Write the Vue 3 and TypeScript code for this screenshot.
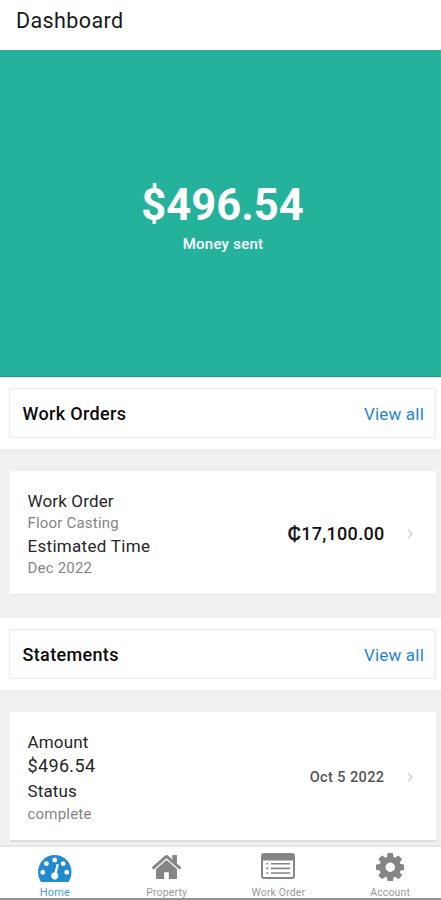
<script setup lang="ts">
interface Line {
  text: string
  kind: string
}
interface Section {
  id: string
  title: string
  lines: Line[]
  symbol: string
  value: string
}
interface Tab {
  id: string
  label: string
}

const sections: Section[] = [
  {
    id: 'orders',
    title: 'Work Orders',
    lines: [
      { text: 'Work Order', kind: 'order' },
      { text: 'Floor Casting', kind: 'muted' },
      { text: 'Estimated Time', kind: 'estimate' },
      { text: 'Dec 2022', kind: 'muted date' },
    ],
    symbol: '₵',
    value: '17,100.00',
  },
  {
    id: 'statements',
    title: 'Statements',
    lines: [
      { text: 'Amount', kind: 'amount' },
      { text: '$496.54', kind: 'sum' },
      { text: 'Status', kind: 'status' },
      { text: 'complete', kind: 'muted complete' },
    ],
    symbol: '',
    value: 'Oct 5 2022',
  },
]

const tabs: Tab[] = [
  { id: 'home', label: 'Home' },
  { id: 'property', label: 'Property' },
  { id: 'order', label: 'Work Order' },
  { id: 'account', label: 'Account' },
]
</script>

<template>
  <div class="screen">
    <header class="header"><h1>Dashboard</h1></header>
    <section class="hero">
      <div class="total">$496.54</div>
      <div class="caption">Money sent</div>
    </section>
    <main class="content">
      <section v-for="s in sections" :key="s.id" :class="['section', s.id]">
        <div class="band">
          <div class="bar">
            <h2>{{ s.title }}</h2>
            <a class="all">View all</a>
          </div>
        </div>
        <div class="tray">
          <article class="card">
            <div class="lines">
              <div v-for="l in s.lines" :key="l.text" :class="['line', l.kind]"><span>{{ l.text }}</span></div>
            </div>
            <div class="value"><span v-if="s.symbol" class="symbol">{{ s.symbol }}</span>{{ s.value }}</div>
            <svg class="chevron" viewBox="0 0 6 10"><path d="M1 1l4 4-4 4" /></svg>
          </article>
        </div>
      </section>
    </main>
    <nav class="tabs">
      <div v-for="t in tabs" :key="t.id" :class="['tab', t.id]">
        <div class="icon">
          <svg v-if="t.id === 'home'" viewBox="0 256 1792 1408" preserveAspectRatio="none"><path d="M384 1152q0-53-37.5-90.5t-90.5-37.5-90.5 37.5-37.5 90.5 37.5 90.5 90.5 37.5 90.5-37.5 37.5-90.5zm192-448q0-53-37.5-90.5t-90.5-37.5-90.5 37.5-37.5 90.5 37.5 90.5 90.5 37.5 90.5-37.5 37.5-90.5zm428 481l101-382q6-26-7.5-48.5t-38.5-29.5-48 6.5-30 39.5l-101 382q-60 5-107 43.5t-63 98.5q-20 77 20 146t117 89 146-20 89-117q16-60-6-117t-72-91zm660-33q0-53-37.5-90.5t-90.5-37.5-90.5 37.5-37.5 90.5 37.5 90.5 90.5 37.5 90.5-37.5 37.5-90.5zm-640-640q0-53-37.5-90.5t-90.5-37.5-90.5 37.5-37.5 90.5 37.5 90.5 90.5 37.5 90.5-37.5 37.5-90.5zm448 192q0-53-37.5-90.5t-90.5-37.5-90.5 37.5-37.5 90.5 37.5 90.5 90.5 37.5 90.5-37.5 37.5-90.5zm320 448q0 261-141 483-19 29-54 29h-1402q-35 0-54-29-141-221-141-483 0-182 71-348t191-286 286-191 348-71 348 71 286 191 191 286 71 348z" /></svg>
          <svg v-else-if="t.id === 'property'" viewBox="97 253 1598 1283" preserveAspectRatio="none"><path d="M1472 992v480q0 26-19 45t-45 19h-384v-384h-256v384h-384q-26 0-45-19t-19-45v-480q0-1 .5-3t.5-3l575-474 575 474q1 2 1 6zm223-69l-62 74q-8 9-21 11h-3q-13 0-21-7l-692-577-692 577q-12 8-24 7-13-2-21-11l-62-74q-8-10-7-23.5t11-21.5l719-599q32-26 76-26t76 26l244 204v-195q0-14 9-23t23-9h192q14 0 23 9t9 23v408l219 182q10 8 11 21.5t-7 23.5z" /></svg>
          <svg v-else-if="t.id === 'order'" viewBox="0 0 34 26"><path fill-rule="evenodd" d="M3 0h28a3 3 0 0 1 3 3v20a3 3 0 0 1-3 3H3a3 3 0 0 1-3-3V3a3 3 0 0 1 3-3zM2 7.5V23a1 1 0 0 0 1 1h28a1 1 0 0 0 1-1V7.5z" /><path d="M5.3 10h2v1.6h-2zM5.3 14.6h2v1.6h-2zM5.3 19.2h2v1.6h-2zM10 10h19v1.6H10zM10 14.6h19v1.6H10zM10 19.2h19v1.6H10z" /></svg>
          <svg v-else viewBox="128 128 1536 1536"><path d="M1152 896q0-106-75-181t-181-75-181 75-75 181 75 181 181 75 181-75 75-181zm512-109v222q0 12-8 23t-20 13l-185 28q-19 54-39 91 35 50 107 138 10 12 10 25t-9 23q-27 37-99 108t-94 71q-12 0-26-9l-138-108q-44 23-91 38-16 136-29 186-7 28-36 28h-222q-14 0-24.5-8.5t-11.5-21.5l-28-184q-49-16-90-37l-141 107q-10 9-25 9-14 0-25-11-126-114-165-168-7-10-7-23 0-12 8-23 15-21 51-66.5t54-70.5q-27-50-41-99l-183-27q-13-2-21-12.5t-8-23.5v-222q0-12 8-23t19-13l186-28q14-46 39-92-40-57-107-138-10-12-10-24 0-10 9-23 26-36 98.5-107.5t94.5-71.5q13 0 26 10l138 107q44-23 91-38 16-136 29-186 7-28 36-28h222q14 0 24.5 8.5t11.5 21.5l28 184q49 16 90 37l142-107q9-9 24-9 13 0 25 10 129 119 165 170 7 8 7 22 0 12-8 23-15 21-51 66.5t-54 70.5q26 50 41 98l183 28q13 2 21 12.5t8 23.5z" /></svg>
        </div>
        <span class="label">{{ t.label }}</span>
      </div>
    </nav>
  </div>
</template>

<style>
body { margin: 0; background: #fff; }
</style>

<style scoped>
.screen {
  width: 441px;
  height: 900px;
  overflow: hidden;
  display: flex;
  flex-direction: column;
  background: #fff;
  font-family: Roboto, "Liberation Sans", sans-serif;
  color: #222;
  white-space: nowrap;
}
h1, h2 { margin: 0; }
.header { height: 50px; box-sizing: border-box; padding: 8px 16px 0; flex: none; }
h1 { font-size: 21.5px; line-height: 25px; font-weight: 400; letter-spacing: 0.4px; color: #191919; }
.hero {
  height: 327px;
  flex: none;
  box-sizing: border-box;
  padding-top: 128px;
  background: #24b29d;
  border-top: 1px solid #4fa796;
  border-bottom: 1px solid #159c84;
  color: #fff;
  text-align: center;
}
.total { font-size: 43.5px; line-height: 54px; font-weight: 700; padding-left: 4px; }
.caption { font-size: 15px; line-height: 20px; font-weight: 500; letter-spacing: 0.25px; padding-left: 5px; margin-top: 1px; }
.content { height: 468px; flex: none; overflow: hidden; background: #f0f0f0; }
.band { height: 72px; box-sizing: border-box; padding: 11px 5px 11px 9px; background: #fff; }
.bar {
  height: 50px;
  box-sizing: border-box;
  border: 1px solid #ececec;
  box-shadow: inset 0 0 0 1px #fafafa;
  display: flex;
  align-items: center;
  justify-content: space-between;
  padding: 1px 11px 0 12.5px;
}
h2 { font-size: 18px; line-height: 24px; font-weight: 500; letter-spacing: 0.35px; color: #0b0b0b; }
.all { font-size: 17px; line-height: 24px; color: #1f84d8; letter-spacing: 0.2px; }
.tray { padding: 22px 5px 23px 10px; }
.card {
  height: 124px;
  box-sizing: border-box;
  background: #fff;
  border-bottom: 1px solid #e6e6e6;
  display: flex;
  align-items: center;
  padding: 2px 23px 0 17.5px;
}
.statements .card { height: 130px; border-bottom: 2px solid #dedede; }
.lines { flex: 1; padding-top: 2px; }
.statements .lines { padding-top: 0; }
.line { font-size: 17px; line-height: 22.4px; height: 22.4px; letter-spacing: 0.15px; color: #262626; }
.line.estimate { letter-spacing: 0.3px; }
.statements .line { height: 24.4px; line-height: 24.4px; }
.line.sum { font-size: 18px; letter-spacing: 0.35px; }
.line.muted { font-size: 15px; letter-spacing: 0.2px; color: #858585; }
.statements .line.muted { height: 21px; line-height: 22.5px; }
.value { font-size: 18px; font-weight: 500; letter-spacing: 0.3px; color: #111; }
.symbol { -webkit-text-stroke: 0.7px #111; }
.statements .value { font-size: 14.5px; letter-spacing: 0.4px; color: #555; }
.chevron { width: 6px; height: 10px; margin-left: 22.5px; fill: none; stroke: #cecece; stroke-width: 1.3; }
.tabs {
  width: 447px;
  height: 55px;
  flex: none;
  box-sizing: border-box;
  margin-left: -1px;
  display: grid;
  grid-template-columns: repeat(4, 1fr);
  border-top: 2px solid #e6e6e6;
  border-bottom: 2px solid #929292;
  background: #fff;
}
.tab { display: flex; flex-direction: column; align-items: center; color: #858585; }
.icon { height: 37px; display: flex; align-items: flex-start; }
.icon svg { display: block; fill: currentColor; }
.home { color: #218bd0; }
.home svg { width: 33.5px; height: 27px; margin-top: 7.5px; }
.property svg { width: 29px; height: 24.5px; margin-top: 7.5px; }
.order svg { width: 34px; height: 26px; margin-top: 6px; }
.account svg { width: 28.5px; height: 28.5px; margin-top: 5.5px; }
.label { font-size: 10.5px; line-height: 13px; margin-top: 2px; letter-spacing: 0.15px; color: #9a9a9a; }
.home .label { font-size: 11px; color: #4ba0dc; }
</style>
